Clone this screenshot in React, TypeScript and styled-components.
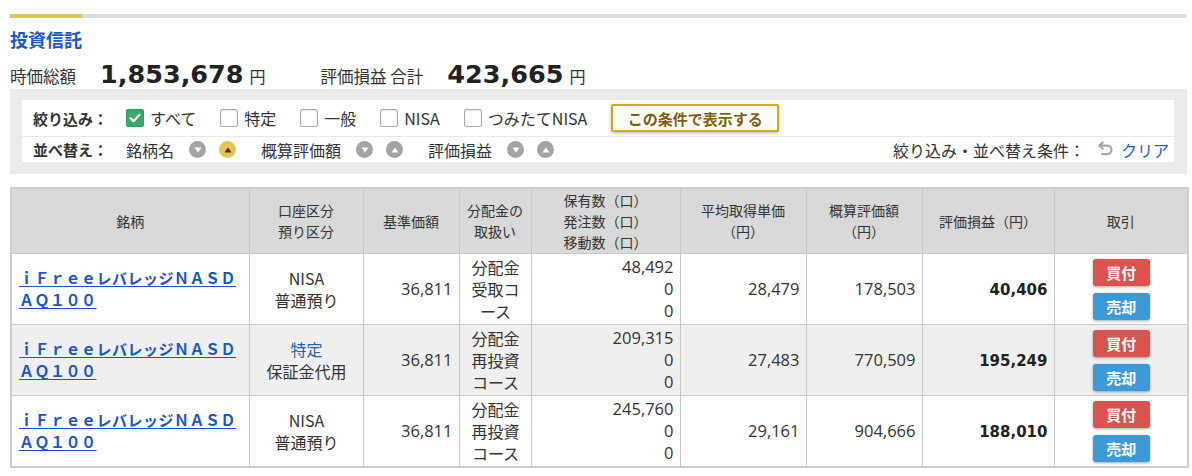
import React from "react";
import styled, { createGlobalStyle } from "styled-components";

const GlobalStyle = createGlobalStyle`
  body {
    margin: 0;
    background: #fff;
    color: #333;
    font-family: "Open Sans", "Noto Sans CJK JP", sans-serif;
  }
`;

type Holding = {
  account: string;
  accountBlue?: boolean;
  deposit: string;
  price: string;
  dividend: string[];
  qty: string[];
  avgCost: string;
  value: string;
  profit: string;
};

const holdings: Holding[] = [
  {
    account: "NISA",
    deposit: "普通預り",
    price: "36,811",
    dividend: ["分配金", "受取コ", "ース"],
    qty: ["48,492", "0", "0"],
    avgCost: "28,479",
    value: "178,503",
    profit: "40,406",
  },
  {
    account: "特定",
    accountBlue: true,
    deposit: "保証金代用",
    price: "36,811",
    dividend: ["分配金", "再投資", "コース"],
    qty: ["209,315", "0", "0"],
    avgCost: "27,483",
    value: "770,509",
    profit: "195,249",
  },
  {
    account: "NISA",
    deposit: "普通預り",
    price: "36,811",
    dividend: ["分配金", "再投資", "コース"],
    qty: ["245,760", "0", "0"],
    avgCost: "29,161",
    value: "904,666",
    profit: "188,010",
  },
];

const colWidths = [238, 114, 96, 72, 149, 126, 116, 132, 134];

const Page = styled.div`
  padding: 14px 5px 0 10px;
`;

const TabLine = styled.div`
  height: 4px;
  background: #dedede;
  display: flex;
`;

const TabActive = styled.div`
  width: 72px;
  background: #e3c456;
`;

const Title = styled.h2`
  margin: 8px 0 0;
  font-family: "Noto Sans CJK JP", sans-serif;
  font-size: 18px;
  line-height: 26px;
  font-weight: 700;
  color: #1e57c6;
`;

const Summary = styled.div`
  display: flex;
  align-items: baseline;
  height: 30px;
  margin-top: 7px;
  white-space: nowrap;
`;

const SummaryLabel = styled.span<{ $gap?: number }>`
  font-family: "Noto Sans CJK JP", sans-serif;
  font-size: 16.5px;
  margin-left: ${(p) => p.$gap ?? 0}px;
`;

const BigNumber = styled.span`
  font-family: "DejaVu Sans", sans-serif;
  font-size: 25.5px;
  font-weight: 700;
  color: #222;
  margin: 0 6px 0 24px;
`;

const Yen = styled.span`
  font-family: "Noto Sans CJK JP", sans-serif;
  font-size: 16px;
`;

const FilterPanel = styled.div`
  background: #ebebeb;
  padding: 11px 13px 12px 12px;
`;

const FilterInner = styled.div`
  background: #fff;
`;

const FilterRow = styled.div<{ $h: number; $line?: boolean }>`
  display: flex;
  align-items: center;
  height: ${(p) => p.$h}px;
  padding: 0 5px 0 11px;
  border-bottom: ${(p) => (p.$line ? "1px solid #e8e8e8" : "none")};
  font-family: "Noto Sans CJK JP", sans-serif;
  font-size: 16px;
  white-space: nowrap;
`;

const RowLabel = styled.span<{ $mr: number }>`
  font-size: 15px;
  font-weight: 700;
  color: #333;
  margin-right: ${(p) => p.$mr}px;
`;

const Check = styled.label`
  display: flex;
  align-items: center;
  gap: 6px;
  margin-right: 24px;
  color: #333;
`;

const Box = styled.span<{ $on?: boolean }>`
  width: 18px;
  height: 18px;
  box-sizing: border-box;
  border-radius: 2px;
  border: 1px solid ${(p) => (p.$on ? "#2f9b5d" : "#a9a9a9")};
  background: ${(p) => (p.$on ? "#3aa86a" : "#fff")};
  box-shadow: ${(p) => (p.$on ? "none" : "inset 0 1px 2px rgba(0,0,0,0.12)")};
  display: flex;
  align-items: center;
  justify-content: center;
`;

const ApplyButton = styled.button`
  width: 168px;
  height: 28px;
  border: 2px solid #d8a90a;
  border-radius: 2px;
  background: #fff;
  color: #7d5f08;
  font-family: "Noto Sans CJK JP", sans-serif;
  font-size: 15px;
  font-weight: 700;
  box-shadow: 0 1px 3px rgba(0, 0, 0, 0.3);
  padding: 0;
`;

const SortGroup = styled.div`
  display: flex;
  align-items: center;
  margin-right: 25px;
  color: #333;
`;

const SortText = styled.span`
  margin-right: 15px;
`;

const SortDot = styled.span<{ $on?: boolean }>`
  width: 17px;
  height: 17px;
  border-radius: 50%;
  background: ${(p) => (p.$on ? "#e3c456" : "#a3a3a3")};
  display: flex;
  align-items: center;
  justify-content: center;
  & + & {
    margin-left: 13px;
  }
`;

const ClearArea = styled.div`
  margin-left: auto;
  display: flex;
  align-items: center;
  color: #333;
`;

const UndoWrap = styled.span`
  display: flex;
  margin: 0 7px 0 12px;
`;

const ClearLink = styled.a`
  color: #1a5fd3;
  text-decoration: none;
`;

const Table = styled.table`
  margin-top: 13px;
  width: 100%;
  table-layout: fixed;
  border-collapse: collapse;
  border: 2px solid #cdcdcd;
`;

const Th = styled.th`
  background: #d9d9d9;
  border: 1px solid #c9c9c9;
  height: 64px;
  padding: 0 2px;
  font-family: "Noto Sans CJK JP", sans-serif;
  font-size: 14px;
  line-height: 21px;
  font-weight: 400;
  color: #333;
  text-align: center;
`;

const Tr = styled.tr<{ $alt?: boolean }>`
  background: ${(p) => (p.$alt ? "#efefef" : "#fff")};
`;

const Td = styled.td<{ $align?: "left" | "center" | "right" }>`
  border: 1px solid #c9c9c9;
  padding: 2px 6px 2px 7px;
  font-size: 16.5px;
  line-height: 22px;
  text-align: ${(p) => p.$align ?? "right"};
  color: #333;
  vertical-align: middle;
`;

const Profit = styled.span`
  font-family: "DejaVu Sans", sans-serif;
  font-size: 15px;
  font-weight: 700;
  color: #222;
`;

const JpLines = styled.div<{ $blue?: boolean }>`
  font-family: "Noto Sans CJK JP", sans-serif;
  font-size: 16px;
  color: ${(p) => (p.$blue ? "#2a5fb6" : "inherit")};
`;

const FundLink = styled.a`
  font-family: "Noto Sans CJK JP", sans-serif;
  font-size: 15px;
  letter-spacing: 0.5px;
  line-height: 22px;
  font-weight: 700;
  color: #1a55c4;
  text-decoration: underline;
  text-underline-offset: 2px;
`;

const TradeButton = styled.button<{ $kind: "buy" | "sell" }>`
  display: block;
  margin: 0 auto;
  width: 57px;
  height: 27px;
  border: none;
  border-radius: 3px;
  background: ${(p) => (p.$kind === "buy" ? "#d9534f" : "#3c9ad6")};
  color: #fff;
  font-family: "Noto Sans CJK JP", sans-serif;
  font-size: 15px;
  font-weight: 700;
  box-shadow: 0 1px 3px rgba(0, 0, 0, 0.35);
  padding: 0;
  & + & {
    margin-top: 7px;
  }
`;

const CheckMark = () => (
  <svg width="12" height="10" viewBox="0 0 12 10">
    <path d="M1.5 5.2 4.6 8.2 10.5 1.8" fill="none" stroke="#fff" strokeWidth="2.2" strokeLinecap="round" strokeLinejoin="round" />
  </svg>
);

const Tri = ({ up, on }: { up?: boolean; on?: boolean }) => (
  <svg width="8" height="6" viewBox="0 0 8 6">
    <path d={up ? "M4 0.5 7.5 5.5H0.5Z" : "M0.5 0.5H7.5L4 5.5Z"} fill={on ? "#3a3222" : "#fff"} />
  </svg>
);

const UndoIcon = () => (
  <svg width="17" height="17" viewBox="0 0 24 24" fill="none" stroke="#a5a5a5" strokeWidth="3" strokeLinecap="round" strokeLinejoin="round">
    <path d="M8 11 3.5 6.5 8 2" />
    <path d="M3.5 6.5h11a6 6 0 0 1 0 12H7" />
  </svg>
);

const filters = [
  { label: "すべて", on: true },
  { label: "特定" },
  { label: "一般" },
  { label: "NISA" },
  { label: "つみたてNISA" },
];

const sorts = [
  { label: "銘柄名", active: "up" },
  { label: "概算評価額" },
  { label: "評価損益" },
];

export default function App() {
  return (
    <Page>
      <GlobalStyle />
      <TabLine>
        <TabActive />
      </TabLine>
      <Title>投資信託</Title>

      <Summary>
        <SummaryLabel>時価総額</SummaryLabel>
        <BigNumber>1,853,678</BigNumber>
        <Yen>円</Yen>
        <SummaryLabel $gap={55}>評価損益 合計</SummaryLabel>
        <BigNumber>423,665</BigNumber>
        <Yen>円</Yen>
      </Summary>

      <FilterPanel>
        <FilterInner>
          <FilterRow $h={36} $line>
            <RowLabel $mr={18}>絞り込み：</RowLabel>
            {filters.map((f) => (
              <Check key={f.label}>
                <Box $on={f.on}>{f.on && <CheckMark />}</Box>
                {f.label}
              </Check>
            ))}
            <ApplyButton>この条件で表示する</ApplyButton>
          </FilterRow>
          <FilterRow $h={25}>
            <RowLabel $mr={18}>並べ替え：</RowLabel>
            {sorts.map((s) => (
              <SortGroup key={s.label}>
                <SortText>{s.label}</SortText>
                <SortDot>
                  <Tri />
                </SortDot>
                <SortDot $on={s.active === "up"}>
                  <Tri up on={s.active === "up"} />
                </SortDot>
              </SortGroup>
            ))}
            <ClearArea>
              絞り込み・並べ替え条件：
              <UndoWrap>
                <UndoIcon />
              </UndoWrap>
              <ClearLink>クリア</ClearLink>
            </ClearArea>
          </FilterRow>
        </FilterInner>
      </FilterPanel>

      <Table>
        <colgroup>
          {colWidths.map((w, i) => (
            <col key={i} style={{ width: w }} />
          ))}
        </colgroup>
        <thead>
          <tr>
            <Th>銘柄</Th>
            <Th>口座区分<br />預り区分</Th>
            <Th>基準価額</Th>
            <Th>分配金の<br />取扱い</Th>
            <Th>保有数（口）<br />発注数（口）<br />移動数（口）</Th>
            <Th>平均取得単価<br />（円）</Th>
            <Th>概算評価額<br />（円）</Th>
            <Th>評価損益（円）</Th>
            <Th>取引</Th>
          </tr>
        </thead>
        <tbody>
          {holdings.map((h, i) => (
            <Tr key={i} $alt={i === 1}>
              <Td $align="left">
                <FundLink>
                  ｉＦｒｅｅレバレッジＮＡＳＤ
                  <br />
                  ＡＱ１００
                </FundLink>
              </Td>
              <Td $align="center">
                <JpLines $blue={h.accountBlue}>{h.account}</JpLines>
                <JpLines>{h.deposit}</JpLines>
              </Td>
              <Td>{h.price}</Td>
              <Td $align="center">
                <JpLines>
                  {h.dividend.map((d) => (
                    <div key={d}>{d}</div>
                  ))}
                </JpLines>
              </Td>
              <Td>
                {h.qty.map((q, j) => (
                  <div key={j}>{q}</div>
                ))}
              </Td>
              <Td>{h.avgCost}</Td>
              <Td>{h.value}</Td>
              <Td>
                <Profit>{h.profit}</Profit>
              </Td>
              <Td $align="center">
                <TradeButton $kind="buy">買付</TradeButton>
                <TradeButton $kind="sell">売却</TradeButton>
              </Td>
            </Tr>
          ))}
        </tbody>
      </Table>
    </Page>
  );
}
